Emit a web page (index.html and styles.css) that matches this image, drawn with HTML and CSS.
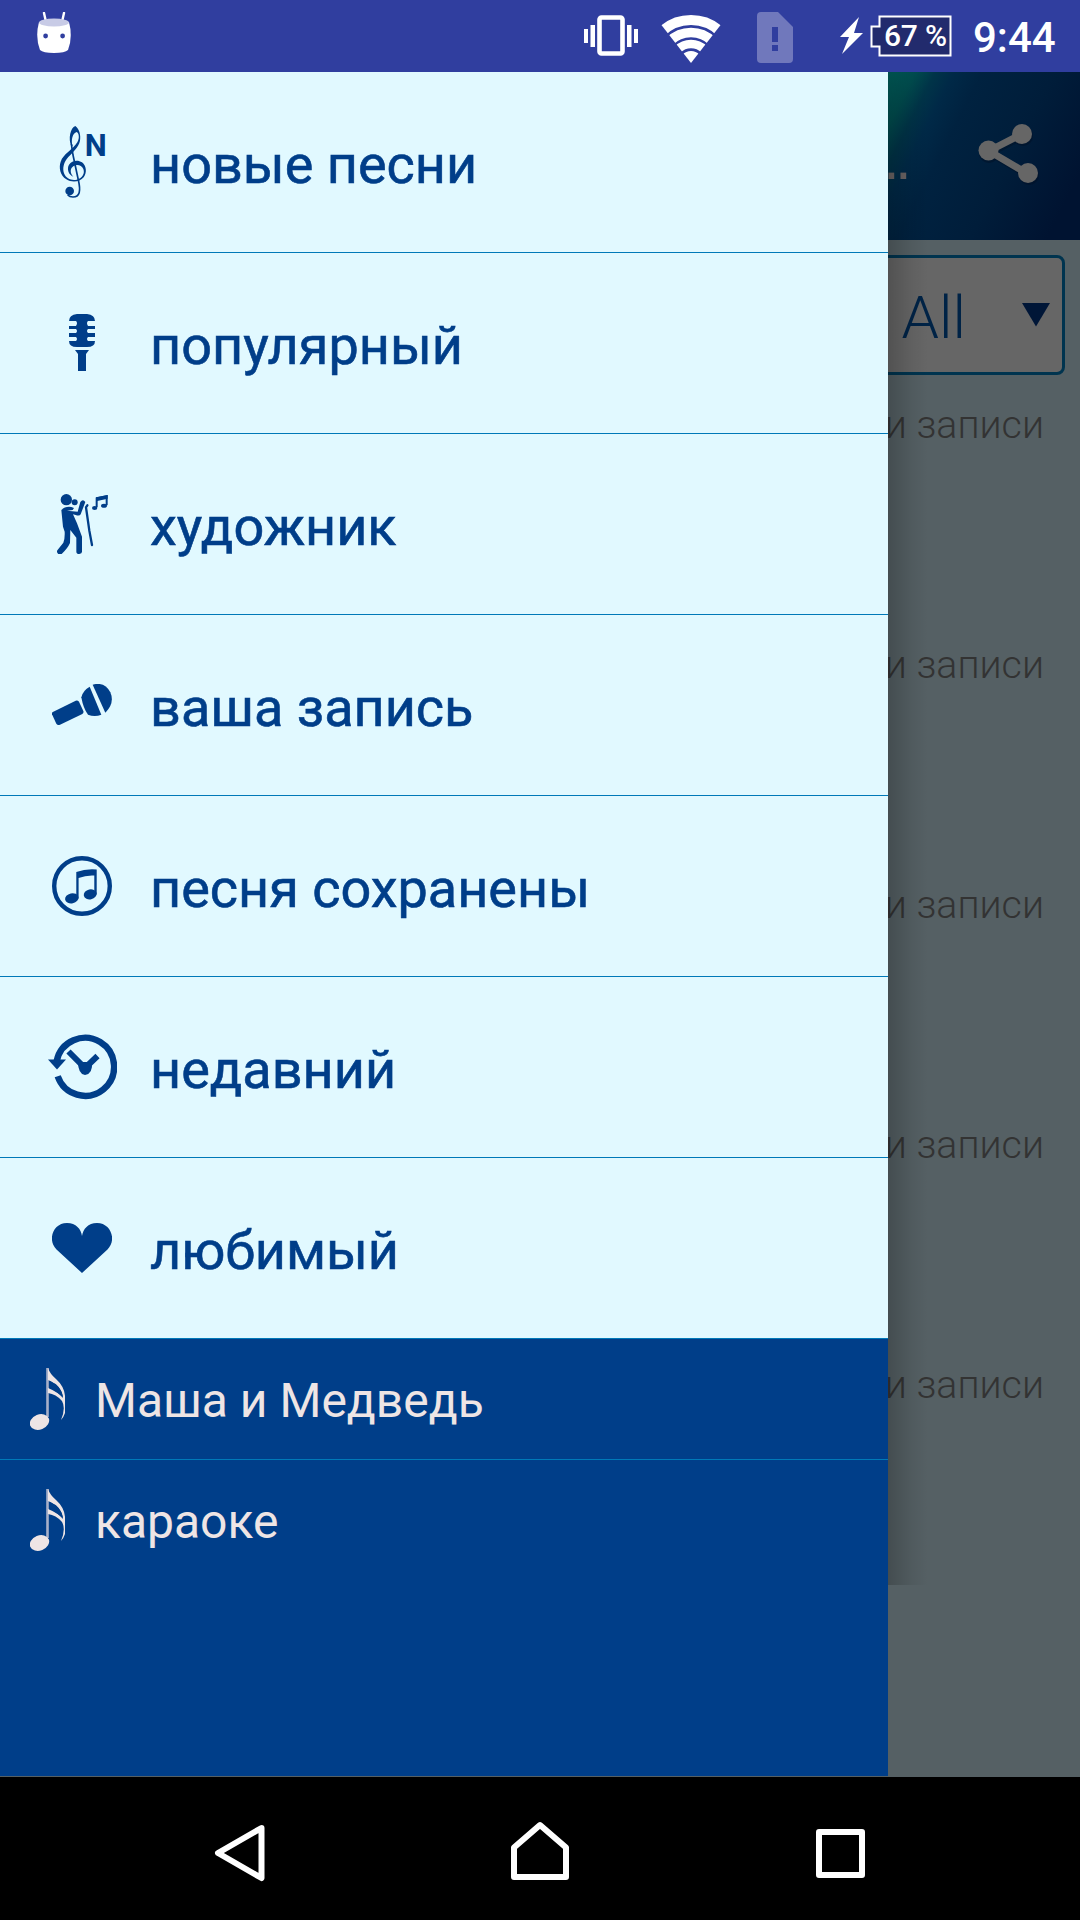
FILE: index.html
```html
<!DOCTYPE html>
<html lang="ru">
<head>
    <meta charset="UTF-8">
    <title>караоке</title>
    <link rel="stylesheet" href="styles.css">
</head>
<body>
<div class="status">
    <svg class="cat" width="34" height="42" viewBox="0 0 34 42">
        <path d="M7 1l2 9M27 1l-2 9" stroke="#fff" stroke-width="2.4" stroke-linecap="round"/>
        <path d="M2 10Q-2 25 3 38Q6 41 17 41Q28 41 31 38Q36 25 32 10Z" fill="#fff"/>
        <ellipse cx="17" cy="10.5" rx="15" ry="4" fill="#c8cbe6"/>
        <circle cx="8.6" cy="24" r="2.4" fill="#303e9f"/>
        <circle cx="25.6" cy="24" r="2.4" fill="#303e9f"/>
    </svg>
    <svg class="vibrate" width="54" height="42" viewBox="0 0 54 42">
        <rect x="15.5" y="2.5" width="23" height="36" rx="2" fill="none" stroke="#fff" stroke-width="4.6"/>
        <path d="M0 14h4v14H0zM6.500 10h4.500v22h-4.500zM43 10h4.500v22H43zM50 14h4v14h-4z" fill="#fff"/>
    </svg>
    <svg class="wifi" width="60" height="48" viewBox="0 0 60 48">
        <clipPath id="fan"><path d="M30 48L0 9.500V0h60v9.500z"/></clipPath>
        <g clip-path="url(#fan)" fill="none" stroke="#fff">
            <circle cx="30" cy="48" r="43" stroke-width="10"/>
            <circle cx="30" cy="48" r="30.500" stroke-width="9.500"/>
            <circle cx="30" cy="48" r="19" stroke-width="8.500"/>
            <circle cx="30" cy="48" r="6" stroke-width="12"/>
        </g>
    </svg>
    <svg class="sim" width="36" height="51" viewBox="0 0 36 51">
        <path d="M4 0h17l15 15v32q0 4-4 4H4q-4 0-4-4V4q0-4 4-4z" fill="#7078bc"/>
        <path d="M15 15h6v15h-6zM15 33h6v6h-6z" fill="#303e9f"/>
    </svg>
    <svg class="bolt" width="23" height="38" viewBox="0 0 23 38">
        <path d="M19 0L0 20h9L2 37L23 16h-9z" fill="#fff"/>
    </svg>
    <div class="battery">
        <svg width="82" height="42" viewBox="0 0 82 42">
            <path d="M9.500 1.500H80.500V40.500H9.500V31.500H1.500V11.500H9.500z" fill="#222b6d" stroke="#fff" stroke-width="2"/>
        </svg>
        <span>67 %</span>
    </div>
    <div class="clock">9:44</div>
</div>

<div class="screen">
    <div class="page">
        <div class="header">
            <span class="title">...</span>
            <svg class="share" width="64" height="66" viewBox="0 0 64 66">
                <path d="M45 12L12 29L51 52" fill="none" stroke="#001126" stroke-width="7" opacity=".5"/>
                <g fill="#001126" opacity=".5"><circle cx="45" cy="12" r="10"/><circle cx="11" cy="29" r="10"/><circle cx="51" cy="51" r="10"/></g>
                <path d="M44 10L11 27L50 50" fill="none" stroke="#666" stroke-width="7"/>
                <g fill="#666"><circle cx="44" cy="10" r="10"/><circle cx="10.500" cy="26.500" r="10"/><circle cx="50" cy="49" r="10"/></g>
            </svg>
        </div>
        <div class="select">
            <span>All</span>
            <svg width="28" height="24" viewBox="0 0 28 24"><path d="M0 0h28L14 23.500z" fill="#001637"/></svg>
        </div>
        <ul class="records">
            <li>и записи</li>
            <li>и записи</li>
            <li>и записи</li>
            <li>и записи</li>
            <li>и записи</li>
        </ul>
    </div>
    <div class="shadow"></div>

    <div class="drawer">
        <ul class="menu">
            <li>
                <div class="ico">
                    <!-- скрипичный ключ -->
                    <svg width="44" height="72" viewBox="180 78 132 216" overflow="visible">
                        <path d="M214 138C204 118 211 82 226 78C238 86 243 106 240 122C236 142 217 158 205 171C191 187 187 204 192 220C198 236 214 242 230 239C248 234 255 220 250 207C245 196 232 192 221 198C210 204 209 220 220 230C205 224 200 206 207 194C215 182 233 178 246 187C260 198 261 219 251 232C240 246 215 249 199 238C180 226 176 202 182 185C190 162 217 150 232 127C240 113 236 98 230 96C218 99 212 120 218 138Z"/>
                        <path d="M214 132L219 165L235 240C243 274 239 291 219 291C211 291 206 288 203 285" fill="none" stroke="#003e89" stroke-width="5"/>
                        <circle cx="209" cy="273" r="13"/>
                        <text x="254" y="167" font-size="96" font-weight="700" textLength="66" lengthAdjust="spacingAndGlyphs">N</text>
                    </svg>
                </div>
                <span>новые песни</span>
            </li>
            <li>
                <div class="ico">
                    <svg width="26" height="58" viewBox="0 0 26 58">
                        <path d="M8 0h10q8 1 8 7h-7q-2 2 0 5h7v3h-7q-2 2 0 4h7v4h-7q-2 2 0 4h7q0 6-8 6H8q-8 0-8-6h7q2-2 0-4H0v-4h7q2-2 0-4H0v-3h7q2-3 0-5H0q0-6 8-7zM6 36h14l-3 4v17H9V40z"/>
                    </svg>
                </div>
                <span>популярный</span>
            </li>
            <li>
                <div class="ico">
                    <svg width="51" height="60" viewBox="171 102 153 180">
                        <circle cx="199" cy="119" r="17"/>
                        <circle cx="224" cy="127" r="9"/>
                        <path d="M184 150q12-12 30-9l8 3l-4 6l-17 2l32 3l8-29q8-10 15 0l-14 37q-3 6-15 2l-8-2l12 27l15 40v45q0 6-8 7q-9 0-9-7v-42l-18-23l-1 39q-7 16-25 33q-5 3-11-1q-5-5-2-10l18-23q5-11 4-33l-5-15z"/>
                        <path d="M262 136l-4 6l10 70l8 43" fill="none" stroke="#003e89" stroke-width="7" stroke-linecap="round"/>
                        <path d="M290 142v-27l30-6v27" fill="none" stroke="#003e89" stroke-width="6"/>
                        <path d="M288 112l35-7v11l-35 8z"/>
                        <ellipse cx="284" cy="144" rx="8" ry="6"/>
                        <ellipse cx="312" cy="137" rx="9" ry="6"/>
                    </svg>
                </div>
                <span>художник</span>
            </li>
            <li>
                <div class="ico">
                    <svg width="60" height="42" viewBox="156 672 180 126">
                        <path d="M160 755l67-33q6-2 10 3l13 28q2 6-3 9l-67 32q-7 3-11-3l-13-28q-2-5 4-8z"/>
                        <path d="M269 680l35 84q-20 8-40 0q-14-18-20-52q4-20 25-32z"/>
                        <path d="M278 674q36-10 53 23q14 32-15 61z"/>
                    </svg>
                </div>
                <span>ваша запись</span>
            </li>
            <li>
                <div class="ico">
                    <svg width="60" height="60" viewBox="0 0 60 60">
                        <circle cx="30" cy="30" r="27.800" fill="none" stroke="#003e89" stroke-width="4.400"/>
                        <path d="M24.300 16Q34 12.500 44.700 13.500V38.500H42.300V19.500Q34 19 26.600 22V42.500H24.300z"/>
                        <ellipse cx="19.800" cy="42.300" rx="6.800" ry="5" transform="rotate(-12 19.800 42.300)"/>
                        <ellipse cx="38.200" cy="38.300" rx="6.500" ry="5" transform="rotate(-12 38.200 38.300)"/>
                    </svg>
                </div>
                <span>песня сохранены</span>
            </li>
            <li>
                <div class="ico">
                    <svg width="69" height="66" viewBox="0 0 69 66">
                        <path d="M8.700 27A29 29 0 1 1 9.700 42.300" fill="none" stroke="#003e89" stroke-width="6.400"/>
                        <path d="M0 25.500H18L9 35.500z"/>
                        <path d="M20.500 17.500L37 34L49.500 22" fill="none" stroke="#003e89" stroke-width="6"/>
                        <path d="M30 28h14q1 12-7 13q-7-1-7-13z"/>
                    </svg>
                </div>
                <span>недавний</span>
            </li>
            <li>
                <div class="ico">
                    <svg width="60" height="50" viewBox="0 0 60 50">
                        <path d="M30 50L4.500 26.500C-5 17 1 0 15 0C24 0 29 6 30 13C31 6 36 0 45 0C59 0 65 17 55.500 26.500z"/>
                    </svg>
                </div>
                <span>любимый</span>
            </li>
        </ul>
        <ul class="submenu">
            <li>
                <svg width="35" height="62" viewBox="0 0 35 62">
                    <path d="M17.500 0V49" stroke="#a7b0c9" stroke-width="2.600"/>
                    <ellipse cx="9.500" cy="54" rx="10" ry="7.500" transform="rotate(-22 9.500 54)"/>
                    <path d="M18 0Q20 6 26 11Q36 20 35 32Q38 44 31 52Q36 40 32 33Q26 26 18 25V20Q28 24 33 30Q32 18 18 12z"/>
                    <path d="M19.500 13Q31 17 33 29L20 19z" fill="#003e89"/>
                </svg>
                <span>Маша и Медведь</span>
            </li>
            <li>
                <svg width="35" height="62" viewBox="0 0 35 62">
                    <path d="M17.500 0V49" stroke="#a7b0c9" stroke-width="2.600"/>
                    <ellipse cx="9.500" cy="54" rx="10" ry="7.500" transform="rotate(-22 9.500 54)"/>
                    <path d="M18 0Q20 6 26 11Q36 20 35 32Q38 44 31 52Q36 40 32 33Q26 26 18 25V20Q28 24 33 30Q32 18 18 12z"/>
                    <path d="M19.500 13Q31 17 33 29L20 19z" fill="#003e89"/>
                </svg>
                <span>караоке</span>
            </li>
        </ul>
    </div>
</div>

<div class="nav">
    <svg width="52" height="58" viewBox="0 0 52 58"><path d="M47.500 4L4 29L47.500 54z"/></svg>
    <svg class="home" width="58" height="60" viewBox="0 0 58 60"><path d="M29 4L55 26.500V56H3V26.500z"/></svg>
    <svg width="49" height="49" viewBox="0 0 49 49"><path d="M3 3H46V46H3z"/></svg>
</div>
</body>
</html>
```

FILE: styles.css
```css
body,div,ul,li{margin:0;padding:0;}
ul{list-style-type:none;}
svg{display:block;flex:none;}
body{width:1080px;height:1920px;overflow:hidden;background:#000;font-family:Roboto,"Noto Sans",sans-serif;}

/* status bar */
.status{display:flex;align-items:center;box-sizing:border-box;height:72px;padding-left:37px;background:#303e9f;color:#fff;}
.status .cat{margin-top:-7px;}
.status .vibrate{margin-left:513px;}
.status .wifi{margin:6px 0 0 23px;}
.status .sim{margin:3px 0 0 36px;}
.status .bolt{margin-left:47px;}
.battery{position:relative;margin-left:7px;}
.battery span{position:absolute;left:14px;top:3px;font-size:30px;line-height:36px;font-weight:500;letter-spacing:-.2px;white-space:nowrap;}
.clock{margin:3px 0 0 21px;font-size:42px;line-height:50px;font-weight:500;}

.screen{position:relative;height:1705px;overflow:hidden;background:#556064;}

/* page under the drawer */
.header{display:flex;align-items:flex-start;justify-content:flex-end;height:168px;
    background:#002544 linear-gradient(117deg,#006460 0,#004e50 10%,#003448 17%,#002947 24%,#002240 34%,#001d3a 60%,#001331 88%) no-repeat right top/192px 168px;}
.title{margin:53px 0 0;font-family:"Liberation Sans",sans-serif;font-size:60px;line-height:68px;letter-spacing:-4.7px;color:#6b6565;}
.share{margin:52px 38px 0 71px;}
.select{display:flex;align-items:center;justify-content:flex-end;box-sizing:border-box;height:120px;margin:15px 15px 0;padding-right:12px;border:3px solid #00344f;border-radius:8px;background:#666;}
.select span{margin-right:56px;padding-top:5px;font-size:60px;line-height:70px;font-weight:300;color:#002346;}
.select svg{margin-bottom:1px;}
.records{padding-top:23px;}
.records li{height:240px;padding-right:36px;text-align:right;font-size:39.3px;line-height:54px;font-weight:300;color:#333;}
.shadow{position:absolute;left:888px;top:0;width:40px;height:1513px;background:linear-gradient(90deg,rgba(0,0,0,.2),rgba(0,0,0,.06) 60%,rgba(0,0,0,0));}

/* drawer */
.drawer{position:absolute;left:0;top:0;width:888px;height:1704px;background:#003e89;}
.menu li{display:flex;align-items:center;height:180px;border-bottom:1px solid #0079b8;background:#e1f9ff;color:#003e89;fill:#003e89;}
.menu .ico{display:flex;justify-content:center;width:164px;margin-right:-14px;}
.menu span{padding-top:5px;font-size:54px;line-height:64px;-webkit-text-stroke:.6px #003e89;}
.submenu li{display:flex;align-items:center;height:120px;padding-left:30px;color:#eee5e5;fill:#eee5e5;}
.submenu li:first-child{border-bottom:1px solid #0079b8;}
.submenu span{margin-left:30px;padding-top:3px;font-size:48px;line-height:56px;}

/* navigation bar */
.nav{display:flex;align-items:center;justify-content:space-between;height:143px;padding:9px 215px 0 214px;box-sizing:border-box;background:#000;}
.nav path{fill:none;stroke:#fff;stroke-width:6;stroke-linejoin:round;}
.nav .home{margin:-4px 2px 0 0;}
```
